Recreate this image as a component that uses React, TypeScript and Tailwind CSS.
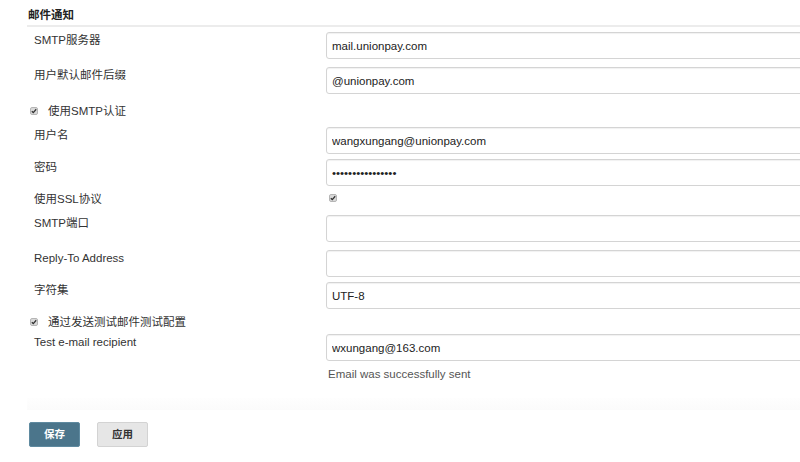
import React from 'react';

const font = "font-['Liberation_Sans','Noto_Sans_CJK_SC',sans-serif]";

function Check({ className = '' }: { className?: string }) {
  return (
    <svg width="8" height="8" viewBox="0 0 8 8" className={className}>
      <rect x="0.5" y="0.5" width="7" height="7" rx="1.5" fill="#d9d9d9" stroke="#b5b5b5" />
      <path d="M1.8 4.2 L3.3 5.6 L6.2 2.3" fill="none" stroke="#333" strokeWidth="1.3" />
    </svg>
  );
}

function Field({ label, value, type = 'text', className = '' }: { label: string; value: string; type?: string; className?: string }) {
  return (
    <div className={`flex items-start ${className}`}>
      <div className="w-[326px] shrink-0 pl-[34px] leading-[16px] text-[#333]">{label}</div>
      <input
        type={type}
        readOnly
        value={value}
        className="h-[27px] w-[490px] shrink-0 rounded-[3px] border border-[#d4d4d4] bg-white px-[5px] text-[11.5px] text-[#222] shadow-[inset_0_1px_1px_rgba(0,0,0,0.06)] outline-none"
      />
    </div>
  );
}

export default function App() {
  return (
    <div className={`relative h-[462px] w-[800px] overflow-hidden bg-white text-[11.5px] ${font}`}>
      <div className="h-[25px] pl-[28px] pt-[7px] text-[11.5px] font-bold leading-[16px] text-[#222]">邮件通知</div>
      <div className="ml-[27px] h-[2px] bg-[#ececec]" />

      <Field label="SMTP服务器" value="mail.unionpay.com" className="mt-[5px]" />
      <Field label="用户默认邮件后缀" value="@unionpay.com" className="mt-[8px]" />

      <div className="mt-[9px] flex h-[16px] items-center leading-[16px] text-[#333]">
        <Check className="ml-[30px]" />
        <span className="ml-[10px]">使用SMTP认证</span>
      </div>

      <Field label="用户名" value="wangxungang@unionpay.com" className="mt-[8px]" />
      <Field label="密码" value="wangxungang12345" type="password" className="mt-[5px]" />

      <div className="mt-[5px] flex h-[16px] items-center leading-[16px] text-[#333]">
        <div className="w-[329px] shrink-0 pl-[34px]">使用SSL协议</div>
        <Check className="-mt-[3px]" />
      </div>

      <Field label="SMTP端口" value="" className="mt-[8px]" />
      <Field label="Reply-To Address" value="" className="mt-[8px]" />
      <Field label="字符集" value="UTF-8" className="mt-[5px]" />

      <div className="mt-[5px] flex h-[16px] items-center leading-[16px] text-[#333]">
        <Check className="ml-[30px]" />
        <span className="ml-[10px]">通过发送测试邮件测试配置</span>
      </div>

      <Field label="Test e-mail recipient" value="wxungang@163.com" className="mt-[4px]" />
      <div className="mt-[5px] pl-[328px] leading-[16px] text-[#555]">Email was successfully sent</div>

      <div className="ml-[27px] mt-[16px] h-[12px] bg-gradient-to-b from-[#fefefe] to-[#fbfbfb]" />

      <div className="ml-[29px] mt-[12px] flex gap-[17px]">
        <button className="h-[25px] w-[51px] rounded-[2px] border border-[#5f8aa0] bg-[#4b758b] text-[10.5px] font-bold text-white">
          保存
        </button>
        <button className="h-[25px] w-[51px] rounded-[2px] border border-[#d3d3d3] bg-[#e6e6e6] text-[10.5px] font-bold text-[#333]">
          应用
        </button>
      </div>
    </div>
  );
}
